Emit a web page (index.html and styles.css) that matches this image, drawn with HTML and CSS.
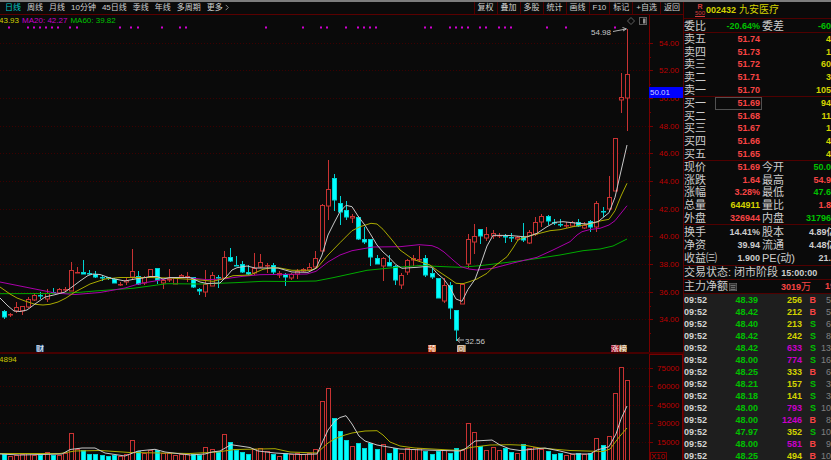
FILE: index.html
```html
<!DOCTYPE html>
<html lang="zh-CN">
<head>
<meta charset="utf-8">
<title>九安医疗 002432</title>
<link rel="stylesheet" href="styles.css">
</head>
<body>
<div class="app">
  <main class="chart">
    <nav class="toolbar">
      <div class="periods">
        <button class="active">日线</button>
        <button>周线</button>
        <button>月线</button>
        <button>10分钟</button>
        <button>45日线</button>
        <button>季线</button>
        <button>年线</button>
        <button>多周期</button>
        <button>更多
          <svg class="chevron" viewBox="0 0 4 8"><path d="M0.5 1L3.5 4L0.5 7"/></svg>
        </button>
      </div>
      <div class="tools">
        <button>复权</button>
        <button>叠加</button>
        <button>多股</button>
        <button>统计</button>
        <button>画线</button>
        <button>F10</button>
        <button>标记</button>
        <button>+自选</button>
        <button>返回</button>
      </div>
    </nav>

    <div class="legend">
      <span class="yellow">43.93</span>
      <span class="magenta">MA20: 42.27</span>
      <span class="green">MA60: 39.82</span>
      <svg class="legend-icons" viewBox="0 0 20 10">
        <path d="M4 1.5L7.5 5L4 8.5L0.5 5Z"/>
        <rect x="12.5" y="1.5" width="7" height="7"/>
        <rect class="fill" x="16" y="2.5" width="2.5" height="5"/>
      </svg>
      <span class="axis-gap"></span>
    </div>

    <svg class="pane price-pane" id="price" viewBox="0 26 683 326">
      <g id="price-grid"></g>
      <g id="signals"></g>
      <g id="candles"></g>
      <polyline class="ma60" points="0,293.7 60,293.5 80,292.3 95,291 133,288.3 150,286 167,283.7 200,284 235,282.7 263,281.3 290,281.5 316,281 333,277.7 350,274 367,270.3 397,267.3 420,265.5 440,266.5 460,267.3 480,265.7 527,260 560,255 583,250.7 600,249 613,246 627,239"/>
      <polyline class="ma20" points="0,282 30,288 55,293 75,294.5 100,292.5 125,288 140,283.5 155,281 170,278 185,277.5 200,279 207,279.7 223,279 243,276.3 260,274.7 307,274 316,271.3 328,262 340,255 352,250.7 373,247 400,246.7 419,244.7 432,245.7 438,248 444,252 453,260 461,266.7 469,269 477,270 493,268.3 513,263 537,257.3 553,250 570,241.7 577,235 582,231.7 590,229.5 600,228.3 609,225 615,220.7 627,205.7"/>
      <polyline class="ma10" points="0,287 10,294 17,298 25,301 35,304.3 43,305 50,304.3 58,302 66,298 75,292 90,284 105,279 120,277.5 150,277.5 170,278 200,280 213,281.3 225,278.3 233,275.7 250,275 263,269.3 272,267.7 280,268 292,270.3 310,270.3 317,268 328,255 340,242.7 352,230.7 360,226.7 371,223.3 377,224 383,229.3 392,240 400,250 413,259.3 430,265 438,271 444,275 450,279 456,283.3 463,283.7 470,281.5 477,279 487,273.3 493,267.3 507,256.7 513,248 518,240 525,237 537,234 550,230.7 560,229.7 573,226.7 590,224 600,221 609,219.3 615,210.7 621,196 627,183.3"/>
      <polyline class="ma5" points="0,298 8,306 14,311 20,311.5 27,310 35,304 45,297 55,294.7 65,292 72,287 80,281 88,275.5 93,274 100,274.5 110,278 120,280 125,281 135,279 143,278 150,276.5 157,276.5 163,279 170,277.5 190,277.5 200,282 207,283.5 220,283 227,276 232,270 237,267.7 247,266 255,268 278,268 285,270 292,272 308,272.3 316,268.3 322,255 328,235 334,223 340,211.7 346,205.3 352,206.7 358,216 365,225.3 371,235 377,245 383,252 389,257.3 396,264.7 402,268.3 417,267.3 426,266.5 432,267.3 437,273.3 444,279.3 450,287.7 456,299 462,301.3 468,289.3 475,279.3 481,263.3 487,246 493,235.3 510,235.5 527,237 537,233.3 547,226.7 555,222.3 563,221.7 575,223 587,224 598,221.7 609,212.7 615,197.3 621,171 627,145"/>
      <path class="arrow" d="M613 31.5L626 29M622.500 27.500L626.500 28.900L623 31M464 340H457M460 337.500L457 340L460 342.500"/>
      <text class="mark" x="591" y="35">54.98</text>
      <text class="mark" x="465" y="344">32.56</text>
      <g id="price-axis"></g>
      <g class="badges">
        <rect class="badge-blue" x="36" y="345" width="8" height="8"/>
        <text x="36" y="352">财</text>
        <rect class="badge-orange" x="428" y="345" width="8" height="8"/>
        <text x="428" y="352">预</text>
        <rect class="badge-tan" x="457" y="345" width="9" height="8"/>
        <text x="457" y="352">回</text>
        <rect class="badge-red" x="611" y="345" width="8" height="8"/>
        <text x="611" y="352">涨</text>
        <rect class="badge-brown" x="619" y="345" width="8" height="8"/>
        <text x="619" y="352">榜</text>
      </g>
    </svg>

    <svg class="pane volume-pane" id="volume" viewBox="0 354 683 106">
      <g id="volume-grid"></g>
      <g id="bars"></g>
      <polyline class="ma10" points="0,453.5 60,453.5 75,451 100,450.5 130,452.5 190,453.5 217,452 235,449.5 275,448.7 290,452 317,453 328,443 335,438.7 345,435 352,433 365,431 377,430.7 383,435 390,442 400,446 415,448 450,450 460,450.3 470,447.5 490,445 510,444.7 525,445.3 540,448 570,450.5 603,451.5 610,449 620,436 627,428"/>
      <polyline class="ma5" points="0,454 20,455 62,454 70,449.5 82,448 95,448 105,453 125,456 138,451 155,449.3 165,452 190,455 205,454 212,452 220,451 231,444.7 250,447.5 258,451 275,453 300,454.5 317,454 322,443 328,430 335,421 340,417.5 346,415.7 352,424 359,436 365,441 377,445 400,449 425,450 460,451 465,449 475,441 492,440 500,445 510,449 520,450.5 545,448 560,451 572,454 590,454 597,450 609,446.7 616,434 621,419 627,406"/>
      <text class="volume-value" x="-1" y="362">4894</text>
      <g id="volume-axis"></g>
    </svg>
  </main>

  <aside class="quote">
    <header class="stock">
      <span class="flag"><b>R</b><u>500</u></span>
      <b class="code">002432</b>
      <span class="name">九安医疗</span>
    </header>

    <table class="rows ratio">
      <colgroup><col class="label"><col class="value"><col class="label2"><col></colgroup>
      <tr><th>委比</th><td class="green">-20.64%</td><th>委差</th><td class="green">-60</td></tr>
    </table>

    <table class="rows book">
      <colgroup><col class="label"><col class="value"><col></colgroup>
      <tr><th>卖五</th><td class="red">51.74</td><td class="yellow">4</td></tr>
      <tr><th>卖四</th><td class="red">51.73</td><td class="yellow">1</td></tr>
      <tr><th>卖三</th><td class="red">51.72</td><td class="yellow">60</td></tr>
      <tr><th>卖二</th><td class="red">51.71</td><td class="yellow">3</td></tr>
      <tr><th>卖一</th><td class="red">51.70</td><td class="yellow">105</td></tr>
    </table>

    <table class="rows book">
      <colgroup><col class="label"><col class="value"><col></colgroup>
      <tr><th>买一</th><td class="red current">51.69</td><td class="yellow">94</td></tr>
      <tr><th>买二</th><td class="red">51.68</td><td class="yellow">11</td></tr>
      <tr><th>买三</th><td class="red">51.67</td><td class="yellow">1</td></tr>
      <tr><th>买四</th><td class="red">51.66</td><td class="yellow">4</td></tr>
      <tr><th>买五</th><td class="red">51.65</td><td class="yellow">4</td></tr>
    </table>

    <table class="rows book">
      <colgroup><col class="label"><col class="value"><col class="label2"><col></colgroup>
      <tr><th>现价</th><td class="red">51.69</td><th>今开</th><td class="green">50.0</td></tr>
      <tr><th>涨跌</th><td class="red">1.64</td><th>最高</th><td class="red">54.9</td></tr>
      <tr><th>涨幅</th><td class="red">3.28%</td><th>最低</th><td class="green">47.6</td></tr>
      <tr><th>总量</th><td class="yellow">644911</td><th>量比</th><td class="red">1.8</td></tr>
      <tr><th>外盘</th><td class="red">326944</td><th>内盘</th><td class="green">31796</td></tr>
    </table>

    <table class="rows basics">
      <colgroup><col class="label"><col class="value"><col class="label2"><col></colgroup>
      <tr><th>换手</th><td>14.41%</td><th>股本</th><td class="cut">4.89亿</td></tr>
      <tr><th>净资</th><td>39.94</td><th>流通</th><td class="cut">4.48亿</td></tr>
      <tr><th>收益㈢</th><td>1.900</td><th>PE(动)</th><td>21.</td></tr>
    </table>

    <div class="status">交易状态: 闭市阶段 <b>15:00:00</b></div>

    <div class="flow">
      <span>主力净额</span>
      <svg class="note" viewBox="0 0 8 8"><rect width="8" height="8"/><path d="M1.500 2.500H6.500M2 4.500H6M1.500 6.500H6.500"/></svg>
      <span class="red amount"><b>3019</b>万</span>
      <b class="red next">19</b>
    </div>

    <table class="ticks">
      <colgroup><col class="time"><col class="price"><col class="lots"><col class="side"><col></colgroup>
      <tr><td>09:52</td><td class="green">48.39</td><td class="yellow">256</td><td class="red">B</td><td>5</td></tr>
      <tr><td>09:52</td><td class="green">48.42</td><td class="yellow">212</td><td class="red">B</td><td>5</td></tr>
      <tr><td>09:52</td><td class="green">48.40</td><td class="yellow">213</td><td class="green">S</td><td>6</td></tr>
      <tr><td>09:52</td><td class="green">48.42</td><td class="yellow">242</td><td class="green">S</td><td>8</td></tr>
      <tr><td>09:52</td><td class="green">48.42</td><td class="magenta">633</td><td class="green">S</td><td>13</td></tr>
      <tr><td>09:52</td><td class="green">48.00</td><td class="magenta">774</td><td class="green">S</td><td>16</td></tr>
      <tr><td>09:52</td><td class="green">48.25</td><td class="yellow">333</td><td class="red">B</td><td>6</td></tr>
      <tr><td>09:52</td><td class="green">48.21</td><td class="yellow">157</td><td class="green">S</td><td>3</td></tr>
      <tr><td>09:52</td><td class="green">48.18</td><td class="yellow">141</td><td class="green">S</td><td>3</td></tr>
      <tr><td>09:52</td><td class="green">48.00</td><td class="magenta">793</td><td class="green">S</td><td>10</td></tr>
      <tr><td>09:52</td><td class="green">48.00</td><td class="magenta">1246</td><td class="red">B</td><td>8</td></tr>
      <tr><td>09:52</td><td class="green">47.97</td><td class="yellow">352</td><td class="green">S</td><td>10</td></tr>
      <tr><td>09:52</td><td class="green">48.00</td><td class="magenta">581</td><td class="red">B</td><td>9</td></tr>
      <tr><td>09:52</td><td class="green">48.25</td><td class="yellow">494</td><td class="red">B</td><td>10</td></tr>
    </table>
  </aside>
</div>
<script src="chart.js"></script>
</body>
</html>
```

FILE: styles.css
```css
* {
  box-sizing: border-box;
}

body {
  margin: 0;
  background-color: #0a0a0a;
  color: #cccccc;
  font-family: "Liberation Sans", "Noto Sans CJK SC", sans-serif;
  font-size: 8px;
}

.app {
  display: grid;
  grid-template-columns: minmax(0, 1fr) 148px;
  height: 100vh;
  overflow: hidden;
  border-top: 2px solid #7c7c7c;
}

.red { color: #f84444; }
.green { color: #00c000; }
.yellow { color: #d2d200; }
.magenta { color: #c800c8; }

/* toolbar */
.toolbar {
  display: flex;
  justify-content: space-between;
  height: 13px;
  border-bottom: 1px solid #5a0000;
}

.toolbar button {
  padding: 0;
  border: none;
  background: none;
  color: #d0d0d0;
  font: inherit;
  line-height: 12px;
  white-space: nowrap;
  cursor: pointer;
}

.toolbar .active {
  color: #00c8c8;
}

.periods {
  display: flex;
  gap: 6px;
  padding-left: 5px;
}

.chevron {
  width: 4px;
  height: 7px;
  vertical-align: -1px;
  fill: none;
  stroke: #a0a0a0;
}

.tools {
  display: flex;
}

.tools button {
  padding: 0 3px;
  border-left: 1px solid #500000;
}

/* charts */
.chart {
  min-width: 0;
}

.legend {
  display: flex;
  gap: 3px;
  height: 11px;
  line-height: 12px;
  white-space: nowrap;
}

.legend span:first-child {
  margin-left: -1px;
}

.legend-icons {
  width: 20px;
  height: 10px;
  margin-left: auto;
  margin-top: 1px;
  fill: none;
  stroke: #606060;
}

.legend-icons .fill {
  fill: #909090;
  stroke: none;
}

.axis-gap {
  width: 34px;
  margin-left: -1px;
  border-left: 1px solid #6e0000;
}

.pane {
  display: block;
  width: 100%;
  fill: none;
}

.price-pane {
  border-bottom: 2px solid #460000;
  box-sizing: content-box;
}

.pane text {
  font-size: 8px;
}

.ma5 { stroke: #c8c8c8; }
.ma10 { stroke: #aaaa00; }
.ma20 { stroke: #aa00aa; }
.ma60 { stroke: #00aa00; }

.grid {
  stroke: #3c0000;
  stroke-dasharray: 1 2;
}

.axis {
  stroke: #780000;
}

.pane .axis-text {
  fill: #be0000;
}

.up {
  stroke: #c83232;
  fill: #0a0a0a;
}

.down {
  stroke: #00d2d2;
  fill: #00ffff;
}

.signal {
  fill: #d200d2;
}

.tag {
  fill: #0000ff;
}

.pane .tag-text {
  fill: #d0d0ff;
}

.arrow {
  stroke: #b0b0b0;
}

.pane .mark {
  fill: #c8c8c8;
}

.pane .volume-value {
  fill: #c8c800;
}

.badges text {
  fill: #ffffff;
}

.badge-blue { fill: #1e5082; }
.badge-orange { fill: #c85014; }
.badge-tan { fill: #a07850; }
.badge-red { fill: #a01428; }
.badge-brown { fill: #96642d; }

/* quote panel */
.quote {
  overflow: hidden;
  border-left: 1px solid #5a0000;
  font-size: 9px;
}

.quote > * {
  border-bottom: 1px solid #500000;
}

.stock {
  display: flex;
  align-items: center;
  height: 17px;
  padding-left: 11px;
  color: #d2d200;
  white-space: nowrap;
}

.flag {
  display: flex;
  flex-direction: column;
  align-items: center;
  margin-right: 1px;
  color: #d23c3c;
  font-size: 6px;
  line-height: 7px;
}

.flag b {
  font-size: 7px;
}

.name {
  margin-left: 3px;
  font-size: 10px;
  line-height: 14px;
}

.code {
  font-size: 9px;
}

table {
  width: 100%;
  border-collapse: separate;
  border-spacing: 0;
  table-layout: fixed;
}

td,
th {
  padding: 0;
  white-space: nowrap;
  line-height: 12px;
}

th {
  font-size: 11px;
  font-weight: normal;
  text-align: left;
}

td {
  font-weight: bold;
  text-align: right;
}

.rows .label { width: 31px; }
.rows .value { width: 47px; }
.rows .label2 { width: 30px; }

.rows td:nth-child(2) {
  padding-right: 2px;
}

.ratio { height: 14px; }
.book { height: 64px; }
.basics { height: 41px; }

.current {
  outline: 1px solid #505050;
  outline-offset: -1px;
}

.rows .cut {
  padding-left: 17px;
  text-align: left;
  overflow: hidden;
}

.status,
.flow {
  height: 14px;
  font-size: 11px;
  line-height: 13px;
  white-space: nowrap;
}

.status b,
.flow b {
  font-size: 9px;
}

.flow {
  display: flex;
}

.note {
  width: 8px;
  height: 8px;
  margin: 3px 0 0 1px;
  fill: #303030;
  stroke: #707070;
}

.amount {
  flex: 1;
  font-size: 10px;
  text-align: right;
}

.next {
  width: 20px;
  padding-left: 14px;
}

.ticks {
  background-color: #1e1e1e;
}

.ticks .time { width: 26px; }
.ticks .price { width: 48px; }
.ticks .lots { width: 44px; }
.ticks .side { width: 14px; }

.ticks td:first-child {
  text-align: left;
  color: #d2d2d2;
}

.ticks td:last-child {
  color: #808080;
  font-weight: normal;
}
```

FILE: chart.js
```javascript
const NS = 'http://www.w3.org/2000/svg';
const FIRST = 4.3;
const STEP = 6.11;

// direction, high, body top, body bottom, low, volume top
const days = [
  ['d', 310, 311.5, 318, 319, 454], ['u', 313, 314, 315, 317, 456], ['u', 302, 307, 311, 313, 455],
  ['u', 306, 306, 311, 315, 454], ['u', 297, 299, 307, 308, 453], ['u', 293, 295, 300, 301, 455],
  ['d', 292, 295, 296, 299, 455], ['u', 289, 293, 299, 302, 452], ['d', 288, 292, 293, 293, 455],
  ['u', 288, 289, 293, 294, 455], ['u', 287, 289, 290, 292, 453], ['u', 262, 270, 291, 291, 433],
  ['u', 267, 272, 273, 273, 449], ['d', 260, 272, 274, 274, 450], ['d', 270, 273, 274, 275, 454],
  ['d', 271, 274, 277.5, 278, 454], ['d', 275, 277, 278, 281, 455], ['d', 277, 277, 278, 280, 456],
  ['d', 278, 279, 283, 283, 455], ['u', 282, 284, 285, 286, 456], ['u', 278, 280, 282, 285, 454],
  ['u', 249, 271, 277, 280, 440], ['d', 271, 276, 284, 285, 451], ['u', 276, 277, 283, 285, 453],
  ['u', 269, 269, 277, 278, 450], ['d', 268, 268.5, 281, 284, 450], ['u', 279, 280, 283, 289, 453],
  ['u', 269, 279, 280, 282, 453], ['u', 277, 277, 284, 284, 455], ['u', 274, 275, 277, 278, 454],
  ['u', 272, 276, 277, 282, 454], ['d', 277, 277.5, 288, 288, 454], ['d', 288, 289, 291, 295, 455],
  ['u', 270, 284, 292, 297, 447], ['u', 272, 275, 286, 286, 449], ['d', 275, 277, 278, 288, 452],
  ['u', 251, 257, 278, 278, 434], ['d', 248, 257, 261, 262, 442], ['d', 256, 265, 265.5, 266, 450],
  ['d', 261, 264, 272, 273, 452], ['d', 265, 272, 274, 275, 454], ['u', 253, 268, 273, 275, 449],
  ['u', 254, 262, 267, 268, 448], ['u', 263, 265, 266, 273, 451], ['d', 263, 265, 272, 274, 454],
  ['u', 271, 273, 275, 278, 456], ['d', 273, 274, 277, 286, 453], ['u', 273, 274, 278, 280, 454],
  ['u', 269, 271, 274, 279, 453], ['u', 268, 269, 271, 272, 454], ['u', 263, 267, 270, 270, 453],
  ['u', 251, 258, 267, 268, 449], ['u', 204, 205, 251, 251, 401], ['u', 160, 189, 206, 220, 388],
  ['d', 174, 178, 200, 211, 418], ['d', 196, 203, 212, 225, 431], ['d', 201, 210, 217, 220, 440],
  ['u', 214, 216, 218, 223, 446], ['d', 216, 217, 239, 240, 443], ['d', 227, 239, 242, 244, 448],
  ['d', 239, 239, 257, 266, 443], ['d', 255, 258, 264, 264, 449], ['u', 257, 258, 266, 281, 444],
  ['d', 255, 262, 266, 266, 453], ['d', 265, 266, 280, 285, 448], ['u', 273, 275, 285, 289, 453],
  ['u', 259, 260, 272, 275, 448], ['u', 255, 258, 260, 266, 449], ['u', 246, 259, 260, 262, 448],
  ['d', 255, 258, 275, 277, 451], ['d', 268, 273, 277, 279, 454], ['d', 278, 278, 298, 298, 451],
  ['u', 278, 285, 301, 303, 450], ['d', 282, 285, 308, 319, 453], ['d', 310, 310, 330, 341, 448],
  ['u', 283, 284, 304, 304, 450], ['u', 234, 239, 264, 268, 423], ['u', 224, 236, 242, 254, 432],
  ['d', 229, 229, 236, 244, 446], ['u', 227, 234, 238, 241, 450], ['u', 230, 233, 236, 239, 447],
  ['u', 233, 235, 236, 238, 450], ['d', 234, 236, 237, 243, 448], ['d', 233, 237, 238, 242, 452],
  ['u', 236, 237, 239, 241, 453], ['d', 223, 237, 240, 242, 444], ['u', 230, 232, 243, 244, 448],
  ['u', 217, 222, 234, 236, 447], ['u', 214, 216, 222, 227, 449], ['d', 215, 216, 221, 225, 451],
  ['d', 219, 222, 223, 225, 454], ['d', 219, 224, 225, 227, 453], ['u', 222, 225, 226, 228, 455],
  ['u', 221, 222, 226, 227, 454], ['d', 219, 222, 226, 227, 453], ['u', 222, 225, 228, 229, 454],
  ['d', 220, 221, 227, 232, 453], ['u', 201, 203, 227, 232, 438], ['d', 207, 211, 212, 217, 445],
  ['u', 176, 197, 209, 212, 436], ['u', 138, 138, 191, 191, 393], ['u', 73, 97, 100, 113, 367],
  ['u', 29, 74, 98, 131, 380]
];

const signals = [9, 28, 34, 40, 46, 52, 58, 70, 77, 120, 131, 138, 162, 180, 186, 266, 303, 321, 327,
  346, 358, 364, 370, 376, 425, 431, 450, 456, 462, 468, 480, 486, 499, 505, 511, 547, 566, 615];

function add(id, tag, attrs, text) {
  const el = document.createElementNS(NS, tag);
  for (const key in attrs) {
    el.setAttribute(key, attrs[key]);
  }
  if (text) {
    el.textContent = text;
  }
  document.getElementById(id).appendChild(el);
}

function line(id, cls, x1, y1, x2, y2) {
  add(id, 'line', { class: cls, x1: x1, y1: y1, x2: x2, y2: y2 });
}

days.forEach(function(day, i) {
  const [dir, high, top, bottom, low, volume] = day;
  const cls = dir === 'u' ? 'up' : 'down';
  const x = Math.floor(FIRST + STEP * i) + 0.5;
  line('candles', cls, x, high, x, low);
  add('candles', 'rect', { class: cls, x: x - 2, y: Math.floor(top) + 0.5, width: 4, height: Math.max(0.5, Math.floor(bottom - top) - 0.5) });
  add('bars', 'rect', { class: cls, x: x - 2, y: volume + 0.5, width: 4, height: 470 - volume });
});

signals.forEach(function(x) {
  add('signals', 'rect', { class: 'signal', x: x - 1, y: 26.5, width: 2, height: 2 });
});

// price axis, 54.00 down to 34.00
line('price-axis', 'axis', 649.5, 26, 649.5, 352);
for (let i = 0; i <= 10; i++) {
  const y = Math.round(42.7 + i * 27.67) + 0.5;
  line('price-grid', 'grid', 0, y, 649, y);
  line('price-axis', 'axis', 649, y, 653, y);
  line('price-axis', 'axis', 649, y + 14, 651, y + 14);
  add('price-axis', 'text', { class: 'axis-text', x: 659, y: y + 2.5 }, (54 - i * 2).toFixed(2));
}
add('price-axis', 'rect', { class: 'tag', x: 649, y: 87, width: 34, height: 11 });
add('price-axis', 'text', { class: 'tag-text', x: 650, y: 95 }, '50.01');

// volume axis
add('volume-axis', 'rect', { class: 'axis', x: 649.5, y: 354.5, width: 33, height: 120 });
for (let i = 0; i < 5; i++) {
  const y = Math.round(368 + i * 18.4) + 0.5;
  line('volume-grid', 'grid', 0, y, 649, y);
  line('volume-axis', 'axis', 649, y, 653, y);
  add('volume-axis', 'text', { class: 'axis-text', x: 657, y: y + 2.5 }, String(75000 - i * 15000));
}
add('volume-axis', 'rect', { class: 'axis', x: 650.5, y: 452.5, width: 16, height: 8 });
add('volume-axis', 'text', { class: 'axis-text', x: 651, y: 459 }, 'X10');
```
